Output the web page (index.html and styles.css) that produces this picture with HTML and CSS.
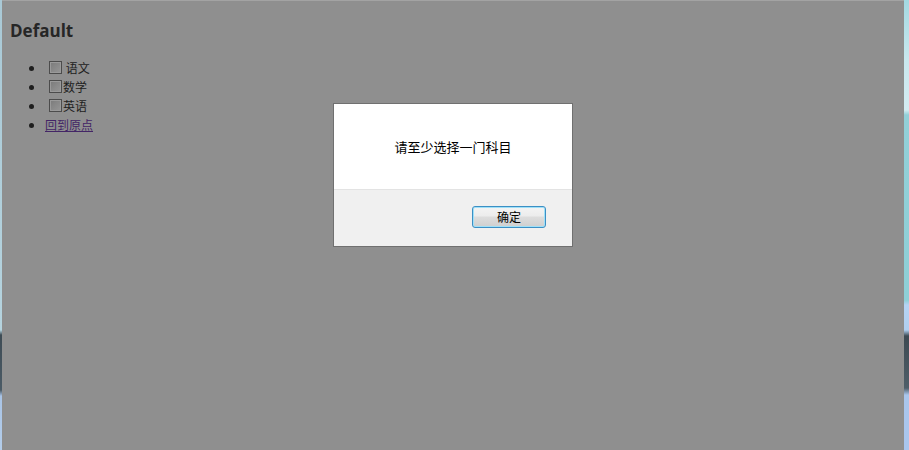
FILE: index.html
```html
<!DOCTYPE html>
<html lang="zh-CN">
<head>
<meta charset="utf-8">
<title>Default</title>
<link rel="stylesheet" href="styles.css">
</head>
<body>
<div class="frame">
  <div class="edge edge-left"></div>
  <main class="page">
    <h3 class="title">Default</h3>
    <ul class="subjects">
      <li><span class="check"></span> 语文</li>
      <li><span class="check"></span>数学</li>
      <li><span class="check"></span>英语</li>
      <li><a class="home-link" href="#">回到原点</a></li>
    </ul>
    <div class="dialog" role="alertdialog">
      <div class="dialog-body">请至少选择一门科目</div>
      <div class="dialog-footer">
        <button class="dialog-btn" type="button">确定</button>
      </div>
    </div>
  </main>
  <div class="edge edge-right"></div>
</div>
</body>
</html>
```
FILE: styles.css
```css
html, body {
  margin: 0;
  padding: 0;
  height: 100%;
  overflow: hidden;
}
body {
  font-family: "Noto Sans CJK SC", "Liberation Sans", sans-serif;
  background: #8f8f8f;
}
.frame {
  display: flex;
  height: 450px;
  width: 909px;
}
.edge {
  flex: none;
}
.edge-left {
  width: 2px;
  background: linear-gradient(to bottom, #a9c9d6 0, #b5d3de 330px, #3e4c55 335px, #4b5b66 390px, #a9c4e6 396px, #b3cdea 450px);
}
.edge-right {
  width: 5px;
  background: linear-gradient(to bottom, #a3d9e2 0, #c9e8ee 60px, #d4ecf2 110px, #92d0d8 115px, #8ecfd6 300px, #b6d4f4 305px, #b0cff0 330px, #3d4a52 336px, #4f5e68 388px, #aac6ec 395px, #a9c6ee 450px);
}
.page {
  flex: 1;
  position: relative;
  border-top: 1px solid #a3a3a3;
  padding: 18px 8px 0 8px;
  color: #1c1c1c;
}
.title {
  margin: 0;
  font-family: "Open Sans", "Liberation Sans", sans-serif;
  font-weight: 700;
  font-size: 17px;
  line-height: 24px;
  color: #262626;
}
.subjects {
  margin: 15px 0 0 0;
  padding-left: 35px;
  font-size: 12px;
  line-height: 19px;
  color: #1e1e1e;
}
.subjects li {
  height: 19px;
}
.check {
  display: inline-block;
  box-sizing: border-box;
  width: 13px;
  height: 13px;
  margin: 0 1px 0 4px;
  vertical-align: -1px;
  border: 1px solid #4c4c4c;
  background: linear-gradient(135deg, #7a7a7a 0%, #8a8a8a 55%, #969696 100%);
  box-shadow: inset 0 0 0 1px #9a9a9a;
}
.home-link {
  color: #432566;
  text-decoration: underline;
}
.dialog {
  position: absolute;
  left: 331px;
  top: 102px;
  width: 238px;
  border: 1px solid #707070;
  background: #ffffff;
}
.dialog-body {
  height: 85px;
  display: flex;
  align-items: center;
  justify-content: center;
  font-size: 13px;
  color: #000;
  border-bottom: 1px solid #e3e3e3;
}
.dialog-footer {
  height: 56px;
  background: #f0f0f0;
  display: flex;
  justify-content: flex-end;
  align-items: flex-start;
  padding: 16px 26px 0 0;
  box-sizing: border-box;
}
.dialog-btn {
  width: 74px;
  height: 22px;
  padding: 0;
  font-family: "Noto Sans CJK SC", "Liberation Sans", sans-serif;
  font-size: 12px;
  line-height: 18px;
  color: #000;
  border: 1px solid #3c8fc4;
  border-radius: 3px;
  background: linear-gradient(to bottom, #f4f4f4 0%, #ececec 45%, #dddddd 50%, #cfcfcf 100%);
  box-shadow: inset 0 0 0 1px #9fe0f8;
}
```
